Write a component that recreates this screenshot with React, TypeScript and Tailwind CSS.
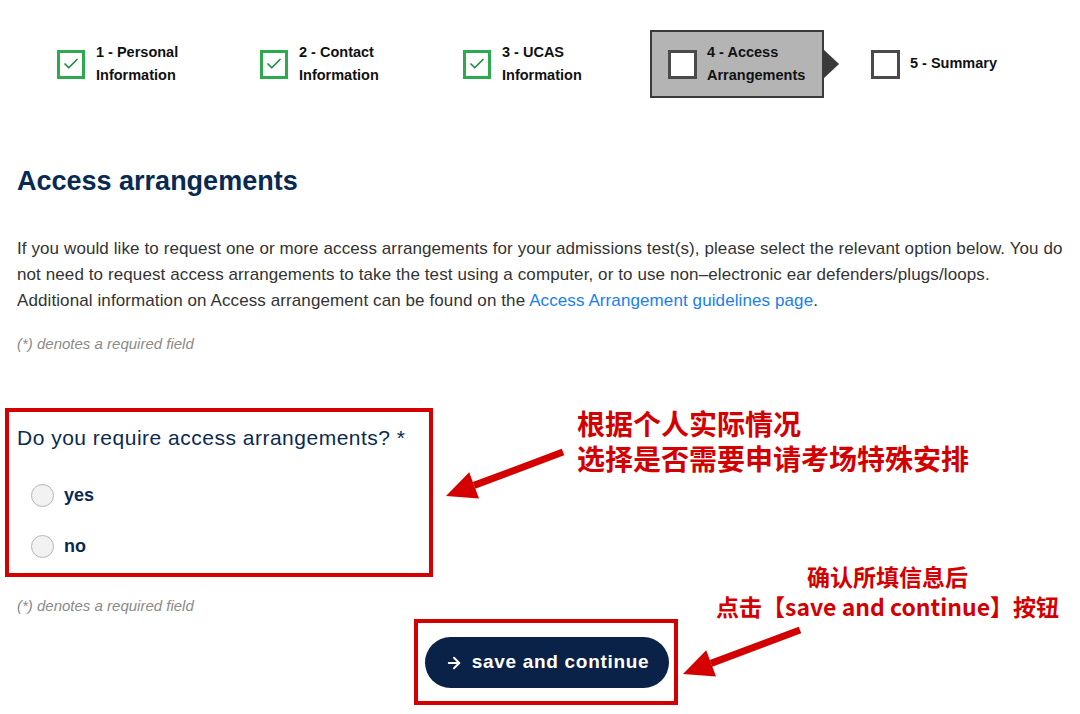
import { ArrowRight, Check } from 'lucide-react'

const sans = "font-['Liberation_Sans',Arial,sans-serif]"
const cjk = "font-['Noto_Sans_CJK_SC','Noto_Sans',sans-serif]"

function DoneStep({ line1, line2, width }: { line1: string; line2: string; width: string }) {
  return (
    <div className={`flex items-center gap-[11px] ${width}`}>
      <div className="flex h-[29px] w-[28px] items-center justify-center border-[3px] border-[#2eaa4e] bg-white">
        <Check className="h-[18px] w-[18px] text-[#1f8a45]" strokeWidth={2.25} />
      </div>
      <div className="text-[14.5px] font-bold leading-[23px] text-[#111]">
        <div>{line1}</div>
        <div>{line2}</div>
      </div>
    </div>
  )
}

function Stepper() {
  return (
    <div className="flex h-[68px] items-center pl-[57px]">
      <DoneStep line1="1 - Personal" line2="Information" width="w-[203px]" />
      <DoneStep line1="2 - Contact" line2="Information" width="w-[203px]" />
      <DoneStep line1="3 - UCAS" line2="Information" width="w-[187px]" />
      <div className="relative flex h-[68px] w-[174px] items-center gap-[10px] border-2 border-[#3a3a3a] bg-[#b4b4b4] pl-[16px]">
        <div className="h-[29px] w-[29px] border-[3px] border-[#4a4a4a] bg-white" />
        <div className="text-[14.5px] font-bold leading-[23px] text-[#111]">
          <div>4 - Access</div>
          <div>Arrangements</div>
        </div>
        <div className="absolute left-[171px] top-[17px] h-0 w-0 border-y-[15px] border-l-[16px] border-y-transparent border-l-[#3a3a3a]" />
      </div>
      <div className="ml-[47px] flex items-center gap-[10px]">
        <div className="h-[29px] w-[29px] border-[3px] border-[#4a4a4a] bg-white" />
        <div className="text-[14.5px] font-bold text-[#111]">5 - Summary</div>
      </div>
    </div>
  )
}

function Radio({ label }: { label: string }) {
  return (
    <label className="flex h-[51px] items-center gap-[10px] pl-[14px]">
      <span className="h-[23px] w-[23px] rounded-full border border-[#b5b5b5] bg-[#f2f2f2]" />
      <span className="text-[18px] font-bold text-[#0b2a52]">{label}</span>
    </label>
  )
}

function RequiredNote({ className }: { className: string }) {
  return (
    <p className={`ml-[17px] text-[15px] italic leading-[20px] text-[#8a8a8a] ${className}`}>
      (*) denotes a required field
    </p>
  )
}

export default function App() {
  return (
    <div className={`relative h-[714px] w-[1080px] overflow-hidden bg-white ${sans}`}>
      <div className="pt-[30px]">
        <Stepper />
      </div>

      <h1 className="ml-[17px] mt-[68px] text-[27px] font-bold leading-[31px] text-[#082a52]">
        Access arrangements
      </h1>

      <div className="ml-[17px] mt-[39px] whitespace-nowrap text-[17px] leading-[26px] tracking-[0.1px] text-[#333]">
        <div>
          If you would like to request one or more access arrangements for your admissions test(s), please select the
          relevant option below. You do
        </div>
        <div>
          not need to request access arrangements to take the test using a computer, or to use non–electronic ear
          defenders/plugs/loops.
        </div>
        <div>
          Additional information on Access arrangement can be found on the{' '}
          <a className="text-[#1a7ef0]">Access Arrangement guidelines page</a>.
        </div>
      </div>

      <RequiredNote className="mt-[20px]" />

      <div className="ml-[5px] mt-[54px] h-[169px] w-[428px] border-4 border-[#d40000] pl-[8px] pt-[12px]">
        <div className="text-[21px] leading-[28px] tracking-[0.5px] text-[#0b2a52]">
          Do you require access arrangements? *
        </div>
        <div className="mt-[18px]">
          <Radio label="yes" />
          <Radio label="no" />
        </div>
      </div>

      <RequiredNote className="mt-[19px]" />

      <div className="ml-[414px] mt-[3px] h-[86px] w-[264px] border-4 border-[#d40000] pl-[7px] pt-[14px]">
        <button className="flex h-[51px] w-[244px] items-center justify-center gap-[9px] rounded-full bg-[#0a2247] text-[19px] font-semibold tracking-[0.7px] text-white">
          <ArrowRight className="h-[18px] w-[18px]" strokeWidth={2.5} />
          save and continue
        </button>
      </div>

      <div className={`absolute left-[577px] top-[406px] text-[28px] font-bold leading-[35px] text-[#d40000] ${cjk}`}>
        <div>根据个人实际情况</div>
        <div>选择是否需要申请考场特殊安排</div>
      </div>

      <div className={`absolute left-[700px] top-[561px] w-[375px] text-center text-[23px] font-bold leading-[30px] text-[#d40000] ${cjk}`}>
        <div>确认所填信息后</div>
        <div>点击【save and continue】按钮</div>
      </div>

      <svg className="pointer-events-none absolute left-0 top-0" width="1080" height="714">
        <line x1="563" y1="452" x2="474" y2="485.4" stroke="#d40000" strokeWidth="7" />
        <polygon points="446,496 479,498.5 469.2,472.3" fill="#d40000" />
        <line x1="800" y1="630" x2="711" y2="663.4" stroke="#d40000" strokeWidth="7" />
        <polygon points="683,674 716,676.5 706.2,650.3" fill="#d40000" />
      </svg>
    </div>
  )
}
